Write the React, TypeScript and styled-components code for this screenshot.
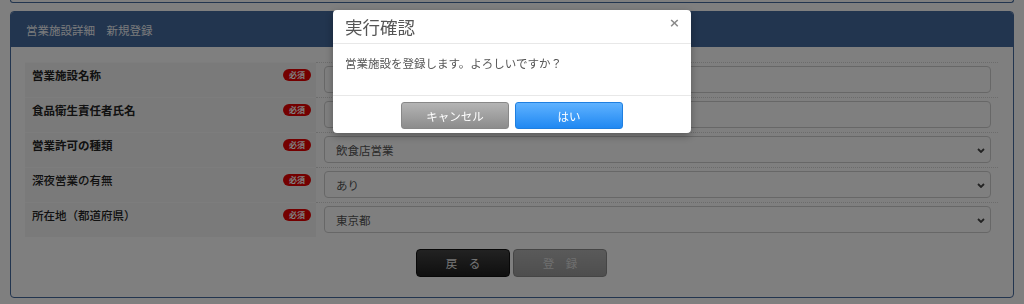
import React from "react";
import styled, { createGlobalStyle } from "styled-components";

const GlobalStyle = createGlobalStyle`
  html, body { margin: 0; padding: 0; background: #ffffff; }
  body {
    font-family: "Noto Sans CJK JP", "Noto Sans", "Liberation Sans", sans-serif;
    font-size: 12px;
    color: #333;
  }
  * { box-sizing: border-box; }
`;

const Page = styled.div`
  padding: 0 10px;
  width: 1024px;
  height: 304px;
  overflow: hidden;
`;

const PrevPanelEdge = styled.div`
  height: 3px;
  border: 1px solid #446a9e;
  border-top: none;
  border-radius: 0 0 4px 4px;
`;

const Panel = styled.section`
  margin-top: 8px;
  border: 1px solid #446a9e;
  border-radius: 4px;
  overflow: hidden;
`;

const PanelHeader = styled.header`
  height: 35px;
  background: #446a9e;
  color: #f2f4f8;
  display: flex;
  align-items: center;
  padding-left: 15px;
  font-size: 11.5px;
`;

const PanelBody = styled.div`
  padding: 15px 15px 20px 14px;
`;

const FormTable = styled.div`
  display: flex;
  flex-direction: column;
`;

const Row = styled.div`
  display: grid;
  grid-template-columns: 291px 1fr;
  height: 35px;
`;

const LabelCell = styled.div`
  background: #f4f4f4;
  border-top: 1px solid #fafafa;
  display: flex;
  align-items: flex-start;
  justify-content: space-between;
  padding: 3px 5px 0 7px;
`;

const LabelText = styled.span<{ $bold?: boolean }>`
  font-size: 11.5px;
  line-height: 18px;
  color: #222;
  font-weight: ${(p) => (p.$bold ? 700 : 500)};
`;

const Badge = styled.span`
  margin-top: 3px;
  width: 28px;
  height: 12px;
  border-radius: 6px;
  background: #e80000;
  color: #fff;
  font-size: 8px;
  font-weight: 700;
  line-height: 12px;
  text-align: center;
  letter-spacing: 0;
`;

const InputCell = styled.div`
  border-top: 1px dotted #d8d8d8;
  padding: 3px 7px 4px 8px;
  position: relative;
`;

const TextInput = styled.input`
  width: 100%;
  height: 27px;
  border: 1px solid #cfcfcf;
  border-radius: 4px;
  background: #fff;
  padding: 0 12px;
  font: inherit;
  font-size: 11.5px;
  color: #555;
  outline: none;
`;

const Select = styled.select`
  appearance: none;
  -webkit-appearance: none;
  width: 100%;
  height: 27px;
  border: 1px solid #cfcfcf;
  border-radius: 4px;
  background: #fff;
  padding: 0 11px;
  font: inherit;
  font-size: 11.5px;
  color: #555;
  outline: none;
`;

const Chevron = styled.svg`
  position: absolute;
  right: 13px;
  top: 15px;
  width: 8px;
  height: 5px;
  pointer-events: none;
`;

const ButtonRow = styled.div`
  margin-top: 12px;
  display: flex;
  justify-content: center;
  gap: 3px;
`;

const PageButton = styled.button<{ $variant: "dark" | "disabled" }>`
  width: 94px;
  height: 28px;
  border-radius: 4px;
  font: inherit;
  font-size: 11.5px;
  border: 1px solid ${(p) => (p.$variant === "dark" ? "#111" : "#8a8a8a")};
  background: ${(p) =>
    p.$variant === "dark"
      ? "linear-gradient(#444, #1e1e1e)"
      : "linear-gradient(#b4b4b4, #9c9c9c)"};
  color: ${(p) => (p.$variant === "dark" ? "#eaeaea" : "#dedede")};
`;

const Overlay = styled.div`
  position: fixed;
  inset: 0;
  background: rgba(0, 0, 0, 0.5);
`;

const Modal = styled.div`
  position: fixed;
  top: 10px;
  left: 333px;
  width: 358px;
  background: #fff;
  border-radius: 4px;
  box-shadow: 0 3px 9px rgba(0, 0, 0, 0.3);
`;

const ModalHeader = styled.div`
  height: 34px;
  border-bottom: 1px solid #e8e8e8;
  display: flex;
  align-items: center;
  justify-content: space-between;
  padding: 0 11px 0 12px;
`;

const ModalTitle = styled.h4`
  margin: 0;
  font-size: 17.5px;
  font-weight: 400;
  color: #555;
`;

const CloseButton = styled.button`
  border: none;
  background: none;
  padding: 0;
  margin-top: -9px;
  font-family: "DejaVu Sans", sans-serif;
  font-size: 13px;
  font-weight: 700;
  color: #8a8a8a;
`;

const ModalBody = styled.div`
  height: 51px;
  padding: 10px 12px;
  font-size: 11.5px;
  line-height: 18px;
  color: #555;
`;

const ModalFooter = styled.div`
  border-top: 1px solid #e8e8e8;
  padding: 6px 0 4px;
  display: flex;
  justify-content: center;
  gap: 6px;
`;

const ModalButton = styled.button<{ $primary?: boolean }>`
  width: 108px;
  height: 27px;
  border-radius: 3px;
  font: inherit;
  font-size: 11.5px;
  color: #fff;
  border: 1px solid ${(p) => (p.$primary ? "#1f7fe0" : "#888")};
  background: ${(p) =>
    p.$primary
      ? "linear-gradient(#5fb2ff, #2088f2)"
      : "linear-gradient(#b4b4b4, #8c8c8c)"};
`;

type Field = {
  label: string;
  bold?: boolean;
  kind: "text" | "select";
  value?: string;
};

const fields: Field[] = [
  { label: "営業施設名称", bold: true, kind: "text" },
  { label: "食品衛生責任者氏名", bold: true, kind: "text" },
  { label: "営業許可の種類", bold: true, kind: "select", value: "飲食店営業" },
  { label: "深夜営業の有無", kind: "select", value: "あり" },
  { label: "所在地（都道府県）", kind: "select", value: "東京都" },
];

export default function App() {
  return (
    <>
      <GlobalStyle />
      <Page>
        <PrevPanelEdge />
        <Panel>
          <PanelHeader>営業施設詳細　新規登録</PanelHeader>
          <PanelBody>
            <FormTable>
              {fields.map((f) => (
                <Row key={f.label}>
                  <LabelCell>
                    <LabelText $bold={f.bold}>{f.label}</LabelText>
                    <Badge>必須</Badge>
                  </LabelCell>
                  <InputCell>
                    {f.kind === "text" ? (
                      <TextInput type="text" defaultValue="" />
                    ) : (
                      <>
                        <Select defaultValue={f.value}>
                          <option>{f.value}</option>
                        </Select>
                        <Chevron viewBox="0 0 8 5">
                          <polyline
                            points="1,1 4,4 7,1"
                            fill="none"
                            stroke="#444"
                            strokeWidth="1.8"
                          />
                        </Chevron>
                      </>
                    )}
                  </InputCell>
                </Row>
              ))}
            </FormTable>
            <ButtonRow>
              <PageButton $variant="dark">戻　る</PageButton>
              <PageButton $variant="disabled">登　録</PageButton>
            </ButtonRow>
          </PanelBody>
        </Panel>
      </Page>
      <Overlay />
      <Modal>
        <ModalHeader>
          <ModalTitle>実行確認</ModalTitle>
          <CloseButton>×</CloseButton>
        </ModalHeader>
        <ModalBody>営業施設を登録します。よろしいですか？</ModalBody>
        <ModalFooter>
          <ModalButton>キャンセル</ModalButton>
          <ModalButton $primary>はい</ModalButton>
        </ModalFooter>
      </Modal>
    </>
  );
}
